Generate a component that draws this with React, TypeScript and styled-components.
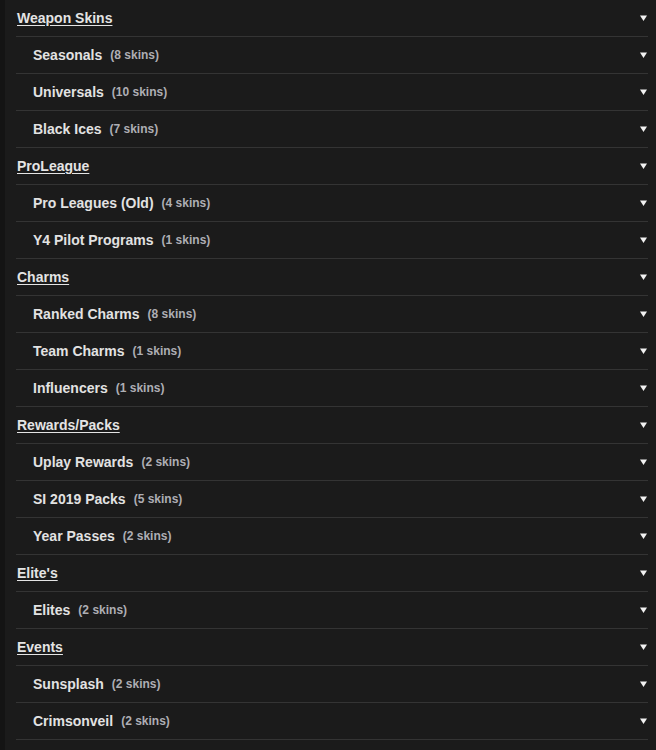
import styled, { createGlobalStyle } from 'styled-components'

const GlobalStyle = createGlobalStyle`
  html, body {
    margin: 0;
    padding: 0;
    background: #1b1b1b;
  }
  body {
    font-family: 'Liberation Sans', Arial, sans-serif;
  }
`

type Item = { name: string; count?: number; header?: boolean }

const items: Item[] = [
  { name: 'Weapon Skins', header: true },
  { name: 'Seasonals', count: 8 },
  { name: 'Universals', count: 10 },
  { name: 'Black Ices', count: 7 },
  { name: 'ProLeague', header: true },
  { name: 'Pro Leagues (Old)', count: 4 },
  { name: 'Y4 Pilot Programs', count: 1 },
  { name: 'Charms', header: true },
  { name: 'Ranked Charms', count: 8 },
  { name: 'Team Charms', count: 1 },
  { name: 'Influencers', count: 1 },
  { name: 'Rewards/Packs', header: true },
  { name: 'Uplay Rewards', count: 2 },
  { name: 'SI 2019 Packs', count: 5 },
  { name: 'Year Passes', count: 2 },
  { name: "Elite's", header: true },
  { name: 'Elites', count: 2 },
  { name: 'Events', header: true },
  { name: 'Sunsplash', count: 2 },
  { name: 'Crimsonveil', count: 2 },
]

const SPage = styled.div`
  min-height: 750px;
  border-left: 5px solid #141414;
  background: #1b1b1b;
`

const SList = styled.div`
  padding: 0 8px 0 11px;
`

const SRow = styled.div<{ $header?: boolean }>`
  display: flex;
  align-items: center;
  height: 36px;
  padding-left: ${(p) => (p.$header ? '1px' : '17px')};
  padding-right: 1px;
  border-bottom: 1px solid #343434;
`

const SHeader = styled.a`
  font-size: 14px;
  font-weight: 700;
  color: #e4e4e4;
  text-decoration: underline;
  text-underline-offset: 2px;
  cursor: pointer;
`

const SName = styled.span`
  font-size: 14px;
  font-weight: 700;
  color: #e2e2e2;
`

const SCount = styled.span`
  margin-left: 8px;
  font-size: 12px;
  font-weight: 700;
  color: #aeaeb4;
`

const SArrow = styled.svg`
  margin-left: auto;
  width: 7px;
  height: 6px;
  fill: #f2f2f2;
`

export default function App() {
  return (
    <SPage>
      <GlobalStyle />
      <SList>
        {items.map((it) => (
          <SRow key={it.name} $header={it.header}>
            {it.header ? (
              <SHeader>{it.name}</SHeader>
            ) : (
              <>
                <SName>{it.name}</SName>
                <SCount>({it.count} skins)</SCount>
              </>
            )}
            <SArrow viewBox="0 0 7 6">
              <path d="M0 0.5 H7 L3.5 6 Z" />
            </SArrow>
          </SRow>
        ))}
      </SList>
    </SPage>
  )
}
